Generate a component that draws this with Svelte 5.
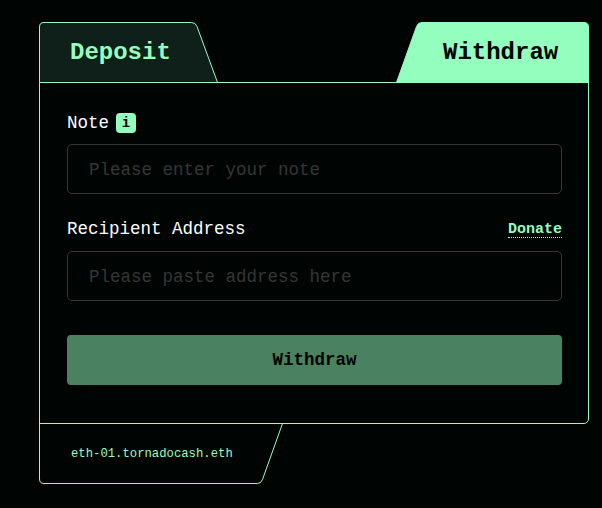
<script>
  let tab = $state("withdraw");
  let note = $state("");
  let recipient = $state("");
</script>

<div class="page">
  <div class="tabs">
    <button class="tab deposit" onclick={() => (tab = "deposit")}>
      <svg width="180" height="61" viewBox="0 0 180 61">
        <path d="M0.5 60.5V5Q0.5 0.5 5 0.5H152.5Q156.5 0.5 158 4.5L178.5 60.5" />
      </svg>
      <span>Deposit</span>
    </button>
    <button class="tab withdraw" onclick={() => (tab = "withdraw")}>
      <svg width="193" height="61" viewBox="0 0 193 61">
        <path d="M0.5 60.5L20.5 4.5Q22 0.5 26 0.5H188Q192.5 0.5 192.5 5V60.5Z" />
      </svg>
      <span>Withdraw</span>
    </button>
  </div>

  <div class="panel">
    <div class="label">
      <span>Note</span>
      <span class="info">i</span>
    </div>
    <input bind:value={note} placeholder="Please enter your note" />

    <div class="label recipient">
      <span>Recipient Address</span>
      <a class="donate" href="#donate">Donate</a>
    </div>
    <input bind:value={recipient} placeholder="Please paste address here" />

    <button class="submit" disabled={!note || !recipient}>Withdraw</button>
  </div>

  <div class="network">
    <svg width="244" height="61" viewBox="0 0 244 61">
      <path d="M0.5 0V56Q0.5 60.5 5 60.5H218.5Q222 60.5 223.5 56.5L243.5 0.5" />
    </svg>
    <span>eth-01.tornadocash.eth</span>
  </div>
</div>

<style>
  :global(body) {
    background: #000403;
  }

  .page {
    box-sizing: border-box;
    width: 602px;
    height: 508px;
    padding: 22px 13px 0 39px;
    overflow: hidden;
    color: #fff;
    font-family: "Liberation Mono", monospace;
    font-size: 17.5px;
  }

  button,
  input {
    box-sizing: border-box;
    margin: 0;
    font-family: inherit;
    outline: none;
  }

  .tabs {
    display: flex;
    justify-content: space-between;
    height: 60px;
  }

  .tab {
    position: relative;
    height: 60px;
    padding: 0;
    border: 0;
    background: none;
    font-size: 24px;
    font-weight: bold;
    text-align: left;
    cursor: pointer;
  }

  svg {
    position: absolute;
    top: 0;
    left: 0;
    fill: none;
    stroke: #94febf;
  }

  .tab span,
  .network span {
    position: relative;
  }

  .deposit {
    width: 180px;
    padding-left: 31px;
    color: #94febf;
  }

  .deposit svg {
    fill: #0f1f19;
  }

  .withdraw {
    width: 193px;
    padding-left: 47px;
    color: #000403;
  }

  .withdraw svg {
    fill: #94febf;
  }

  .panel {
    position: relative;
    box-sizing: border-box;
    height: 342px;
    padding: 29px 26px 0 27px;
    border: 1px solid #94febf;
    border-radius: 0 0 5px 0;
  }

  .label {
    display: flex;
    align-items: center;
    height: 22px;
    margin-bottom: 10px;
  }

  .recipient {
    justify-content: space-between;
    margin: 24px 0 11px;
  }

  .info {
    width: 20px;
    height: 20px;
    margin-left: 7px;
    border-radius: 4px;
    background: #94febf;
    color: #000403;
    font-size: 14px;
    font-weight: bold;
    line-height: 21px;
    text-align: center;
  }

  .donate {
    margin-top: 2px;
    border-bottom: 1px dotted #94febf;
    color: #94febf;
    font-size: 15px;
    font-weight: bold;
    line-height: 14px;
    text-decoration: none;
  }

  input {
    display: block;
    width: 100%;
    height: 50px;
    padding: 1px 21px 0;
    border: 1px solid #363636;
    border-radius: 5px;
    background: transparent;
    color: #94febf;
    font-size: 17.5px;
  }

  input::placeholder {
    color: #363636;
    opacity: 1;
  }

  .submit {
    width: 100%;
    height: 50px;
    margin-top: 34px;
    padding: 0;
    border: 0;
    border-radius: 4px;
    background: #4a8161;
    color: #000403;
    font-size: 17.5px;
    font-weight: bold;
  }

  .network {
    position: relative;
    box-sizing: border-box;
    display: flex;
    align-items: center;
    height: 60px;
    margin-top: -1px;
    padding: 2px 0 0 32px;
    color: #94febf;
    font-size: 12.25px;
  }
</style>
